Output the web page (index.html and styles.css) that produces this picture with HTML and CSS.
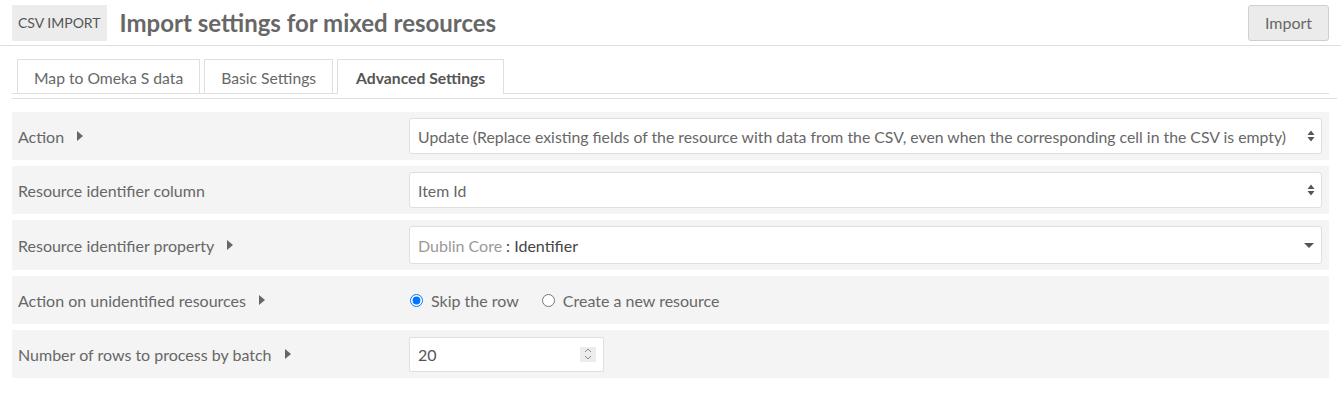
FILE: index.html
```html
<!DOCTYPE html>
<html>
<head>
<meta charset="utf-8">
<title>CSV Import: Import settings for mixed resources</title>
<link rel="stylesheet" href="styles.css">
</head>
<body>
<div class="header">
  <span class="section">CSV Import</span>
  <h1 class="title">Import settings for mixed resources</h1>
  <button class="button" type="button">Import</button>
</div>

<div class="content">
<ul class="tabs">
  <li class="tab"><a href="#mapping">Map to Omeka S data</a></li>
  <li class="tab"><a href="#basic">Basic Settings</a></li>
  <li class="tab active"><a href="#advanced">Advanced Settings</a></li>
</ul>
<div class="tabs-rule"></div>

<fieldset class="section-body">
  <div class="field">
    <div class="field-meta">
      <label>Action</label>
      <svg class="expand" width="6" height="10" viewBox="0 0 6 10"><path d="M0 0 L6 5 L0 10 Z"/></svg>
    </div>
    <div class="inputs">
      <div class="select-wrap">
        <select class="select">
          <option>Update (Replace existing fields of the resource with data from the CSV, even when the corresponding cell in the CSV is empty)</option>
        </select>
        <svg class="arrows" width="8" height="12" viewBox="0 0 8 12"><path d="M0.5 5 L4 0.5 L7.5 5 Z M0.5 7 L7.5 7 L4 11.5 Z"/></svg>
      </div>
    </div>
  </div>

  <div class="field">
    <div class="field-meta">
      <label>Resource identifier column</label>
    </div>
    <div class="inputs">
      <div class="select-wrap">
        <select class="select">
          <option>Item Id</option>
        </select>
        <svg class="arrows" width="8" height="12" viewBox="0 0 8 12"><path d="M0.5 5 L4 0.5 L7.5 5 Z M0.5 7 L7.5 7 L4 11.5 Z"/></svg>
      </div>
    </div>
  </div>

  <div class="field">
    <div class="field-meta">
      <label>Resource identifier property</label>
      <svg class="expand" width="6" height="10" viewBox="0 0 6 10"><path d="M0 0 L6 5 L0 10 Z"/></svg>
    </div>
    <div class="inputs">
      <div class="chosen">
        <span class="chosen-value"><span class="vocab">Dublin Core</span>: Identifier</span>
        <svg class="chosen-arrow" width="10" height="5" viewBox="0 0 10 5"><path d="M0 0 L10 0 L5 5 Z"/></svg>
      </div>
    </div>
  </div>

  <div class="field">
    <div class="field-meta">
      <label>Action on unidentified resources</label>
      <svg class="expand" width="6" height="10" viewBox="0 0 6 10"><path d="M0 0 L6 5 L0 10 Z"/></svg>
    </div>
    <div class="inputs radios">
      <label class="radio"><input type="radio" name="action_unidentified" checked> Skip the row</label>
      <label class="radio"><input type="radio" name="action_unidentified"> Create a new resource</label>
    </div>
  </div>

  <div class="field">
    <div class="field-meta">
      <label>Number of rows to process by batch</label>
      <svg class="expand" width="6" height="10" viewBox="0 0 6 10"><path d="M0 0 L6 5 L0 10 Z"/></svg>
    </div>
    <div class="inputs">
      <div class="number-wrap">
        <input class="number" type="number" value="20" min="1">
        <span class="spin">
          <svg width="8" height="14" viewBox="0 0 8 14"><path d="M1 5 L4 2 L7 5 M1 9 L4 12 L7 9" fill="none" stroke="#8a8a8a" stroke-width="1"/></svg>
        </span>
      </div>
    </div>
  </div>
</fieldset>
</div>
</body>
</html>
```

FILE: styles.css
```css
/* Omeka S admin, CSV Import settings */

body
{ margin: 0;
font-family: Lato, "Open Sans", "Liberation Sans", sans-serif;
font-size: 16px;
color: #676767;
background-color: #fff;
}

/* Header */

div.header
{ display: flex;
align-items: center;
height: 45px;
padding: 0 12px;
border-bottom: 1px solid #dfdfdf;
}

span.section
{ display: flex;
align-items: center;
height: 36px;
padding: 0 6px;
background-color: #ececec;
font-size: 14px;
text-transform: uppercase;
color: #555;
}

h1.title
{ flex: 1;
margin: 0 0 0 13px;
font-size: 24px;
font-weight: 700;
color: #676767;
}

button.button
{ height: 36px;
width: 81px;
padding: 0;
border: 1px solid #cfcfcf;
border-radius: 3px;
background-color: #ebebeb;
font-family: inherit;
font-size: 16px;
color: #676767;
}

/* Tabs */

div.content
{ padding: 0 12px;
}

ul.tabs
{ display: flex;
margin: 13px 0 0 0;
padding: 0 0 0 5px;
list-style: none;
border-bottom: 1px solid #dfdfdf;
}

li.tab
{ height: 34px;
margin-right: 4px;
border: 1px solid #dfdfdf;
border-bottom: none;
box-sizing: border-box;
}

li.tab a
{ display: block;
padding: 0 16px;
line-height: 37px;
font-size: 15.7px;
text-decoration: none;
color: #676767;
}

li.tab.active
{ height: 35px;
margin-bottom: -1px;
background-color: #fff;
}

li.tab.active a
{ padding: 0 18px;
font-weight: 700;
color: #555;
}

div.tabs-rule
{ margin: 4px -8px 0 0;
border-top: 1px solid #dfdfdf;
}

/* Fields */

fieldset.section-body
{ display: flex;
flex-direction: column;
gap: 6px;
margin: 13px 0 0 0;
padding: 0;
border: none;
}

div.field
{ display: grid;
grid-template-columns: 391px 1fr;
align-items: center;
min-height: 48px;
padding: 6px 7px 6px 6px;
box-sizing: border-box;
background-color: #f4f4f4;
}

div.field-meta
{ display: flex;
align-items: center;
}

svg.expand
{ margin-left: 13px;
fill: #666;
}

div.inputs
{ display: flex;
align-items: center;
}

div.select-wrap
{ position: relative;
flex: 1;
}

select.select
{ width: 100%;
height: 36px;
padding: 0 30px 0 8px;
border: 1px solid #dfdfdf;
border-radius: 3px;
background-color: #fff;
font-family: inherit;
font-size: 15.8px;
color: #676767;
-webkit-appearance: none;
appearance: none;
}

svg.arrows
{ position: absolute;
right: 7px;
top: 12px;
fill: #555;
pointer-events: none;
}

div.chosen
{ display: flex;
flex: 1;
align-items: center;
height: 38px;
padding: 0 7px 0 8px;
border: 1px solid #dfdfdf;
border-radius: 3px;
box-sizing: border-box;
background-color: #fff;
}

span.chosen-value
{ flex: 1;
color: #444;
}

span.vocab
{ margin-right: 4px;
color: #999;
}

svg.chosen-arrow
{ fill: #555;
}

div.radios
{ gap: 22px;
}

label.radio
{ display: flex;
align-items: center;
gap: 4px;
}

label.radio input
{ margin: 0 4px 0 1px;
width: 13px;
height: 13px;
}

div.number-wrap
{ position: relative;
}

input.number
{ width: 195px;
height: 35px;
padding: 0 8px;
border: 1px solid #dfdfdf;
border-radius: 2px;
box-sizing: border-box;
font-family: inherit;
font-size: 16px;
color: #555;
-moz-appearance: textfield;
}

input.number::-webkit-inner-spin-button,
input.number::-webkit-outer-spin-button
{ -webkit-appearance: none;
margin: 0;
}

span.spin
{ position: absolute;
right: 8px;
top: 10px;
display: flex;
align-items: center;
justify-content: center;
width: 16px;
height: 15px;
background-color: #ececec;
pointer-events: none;
}
```
